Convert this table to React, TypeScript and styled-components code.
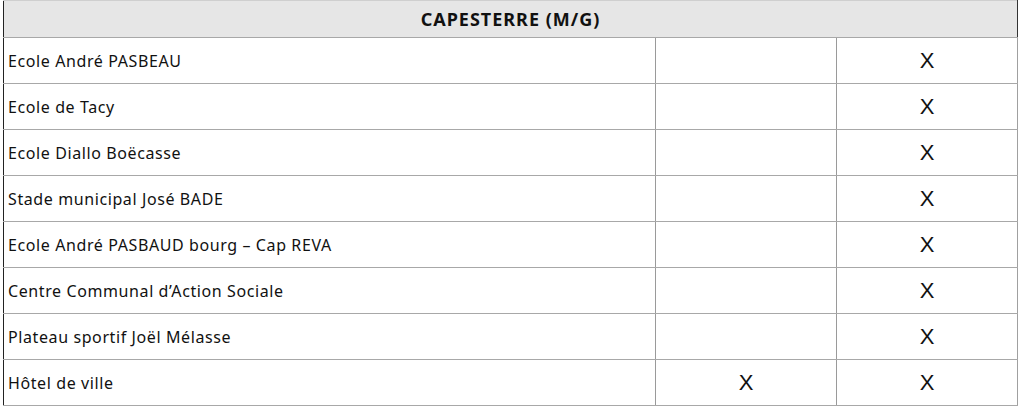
import React from "react";
import styled, { createGlobalStyle } from "styled-components";

const Global = createGlobalStyle`
  html, body { margin: 0; padding: 0; background: #fff; }
  body { font-family: "Noto Sans", sans-serif; color: #111; }
`;

const Wrap = styled.div`
  padding-left: 3px;
  width: 1014px;
`;

const Table = styled.table`
  width: 1014px;
  border-collapse: collapse;
  table-layout: fixed;
  border-left: 1px solid #222;
`;

const HeadCell = styled.th`
  height: 36px;
  padding: 0;
  background: #e6e6e6;
  border-top: 1px solid #cfcfcf;
  border-bottom: 1px solid #a8a8a8;
  border-right: 1px solid #333;
  font-family: "Noto Sans", sans-serif;
  font-weight: 700;
  font-size: 18px;
  letter-spacing: 1px;
  text-align: center;
  color: #111;
`;

const Row = styled.tr`
  height: 46px;
`;

const NameCell = styled.td`
  padding: 0 0 0 4px;
  font-family: "Noto Sans", sans-serif;
  font-size: 16px;
  letter-spacing: 0.6px;
  color: #111;
  border-bottom: 1px solid #a8a8a8;
  border-right: 1px solid #9a9a9a;
  white-space: nowrap;
`;

const MarkCell = styled.td<{ $last?: boolean }>`
  padding: 0;
  text-align: center;
  font-family: "Liberation Sans", Arial, sans-serif;
  font-size: 22px;
  color: #111;
  border-bottom: 1px solid #a8a8a8;
  border-right: 1px solid ${(p) => (p.$last ? "#a0a0a0" : "#9a9a9a")};
`;

const rows: [string, boolean, boolean][] = [
  ["Ecole André PASBEAU", false, true],
  ["Ecole de Tacy", false, true],
  ["Ecole Diallo Boëcasse", false, true],
  ["Stade municipal José BADE", false, true],
  ["Ecole André PASBAUD bourg – Cap REVA", false, true],
  ["Centre Communal d’Action Sociale", false, true],
  ["Plateau sportif Joël Mélasse", false, true],
  ["Hôtel de ville", true, true],
];

export default function App() {
  return (
    <>
      <Global />
      <Wrap>
        <Table>
          <colgroup>
            <col style={{ width: 652 }} />
            <col style={{ width: 181 }} />
            <col style={{ width: 181 }} />
          </colgroup>
          <thead>
            <tr>
              <HeadCell colSpan={3}>CAPESTERRE (M/G)</HeadCell>
            </tr>
          </thead>
          <tbody>
            {rows.map(([name, a, b]) => (
              <Row key={name}>
                <NameCell>{name}</NameCell>
                <MarkCell>{a ? "X" : ""}</MarkCell>
                <MarkCell $last>{b ? "X" : ""}</MarkCell>
              </Row>
            ))}
          </tbody>
        </Table>
      </Wrap>
    </>
  );
}
